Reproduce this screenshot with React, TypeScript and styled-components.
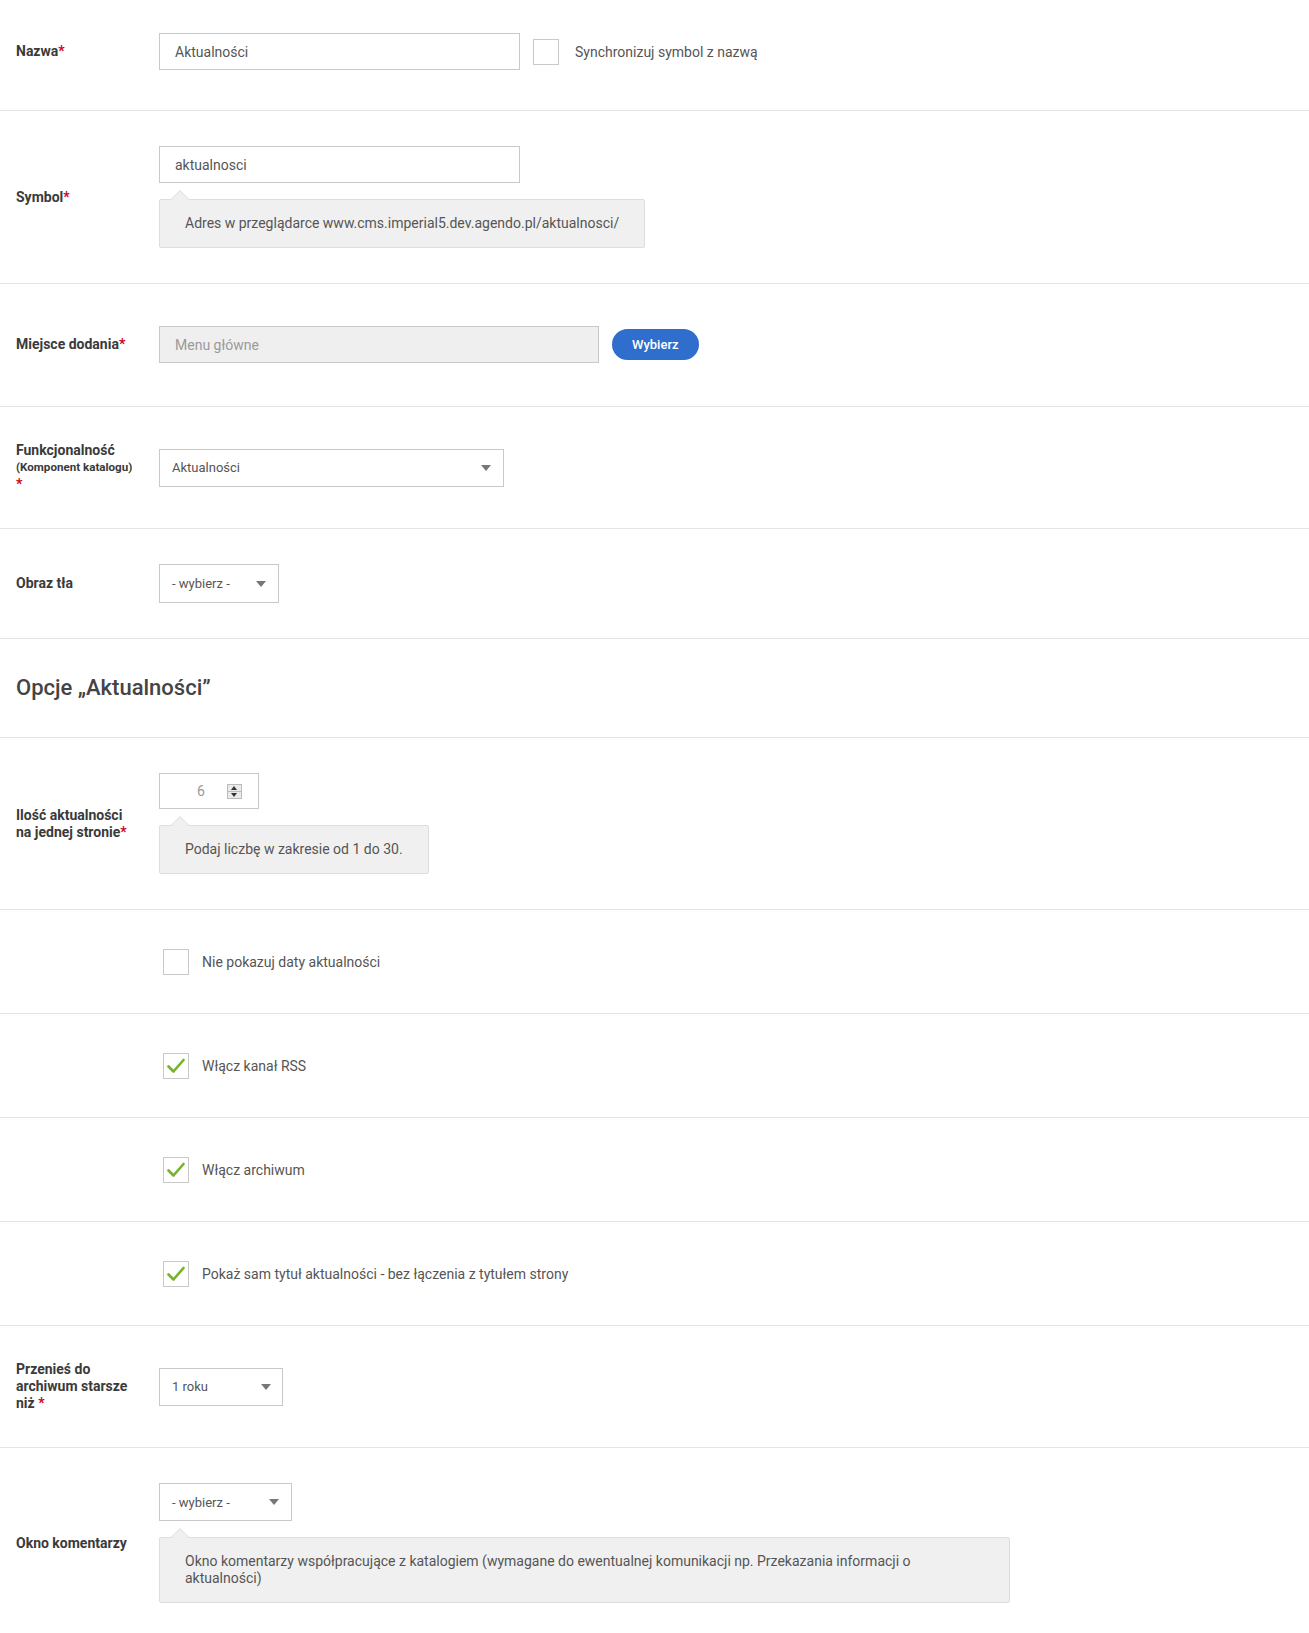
import React from "react";
import styled, { createGlobalStyle } from "styled-components";

const Global = createGlobalStyle`
  html, body { margin: 0; padding: 0; background: #fff; }
  body { font-family: Roboto, "Liberation Sans", Arial, sans-serif; color: #555; }
  * { box-sizing: border-box; }
`;

const Page = styled.div`
  width: 100%;
`;

const Row = styled.div<{ $pad?: string }>`
  display: flex;
  align-items: center;
  padding: ${(p) => p.$pad ?? "35px 0"};
  border-bottom: 1px solid #e4e4e4;
`;

const Label = styled.div`
  flex: 0 0 159px;
  padding: 0 23px 0 16px;
  font-size: 14px;
  line-height: 17px;
  font-weight: 700;
  color: #3a3a3a;
`;

const Sub = styled.span`
  display: block;
  font-size: 11.6px;
  line-height: 17px;
  white-space: nowrap;
`;

const Req = styled.span`
  color: #d0021b;
`;

const Field = styled.div`
  display: flex;
  flex-direction: column;
  align-items: flex-start;
  gap: 16px;
`;

const Inline = styled.div<{ $gap?: number }>`
  display: flex;
  align-items: center;
  gap: ${(p) => p.$gap ?? 13}px;
`;

const TextBox = styled.div<{ $w: number; $disabled?: boolean }>`
  width: ${(p) => p.$w}px;
  height: 37px;
  border: 1px solid #c9c9c9;
  background: ${(p) => (p.$disabled ? "#efefef" : "#fff")};
  color: ${(p) => (p.$disabled ? "#9a9a9a" : "#555")};
  font-size: 14px;
  display: flex;
  align-items: center;
  padding: 0 15px;
`;

const SelectBox = styled.div<{ $w: number; $arrowRight: number; $h?: number }>`
  position: relative;
  width: ${(p) => p.$w}px;
  height: ${(p) => p.$h ?? 38}px;
  border: 1px solid #c9c9c9;
  background: #fff;
  color: #555;
  font-size: 13px;
  display: flex;
  align-items: center;
  padding: 0 12px;
  &::after {
    content: "";
    position: absolute;
    right: ${(p) => p.$arrowRight}px;
    top: 50%;
    margin-top: -3px;
    border-left: 5px solid transparent;
    border-right: 5px solid transparent;
    border-top: 6px solid #777;
  }
`;

const NumberBox = styled.div`
  width: 100px;
  height: 36px;
  border: 1px solid #c9c9c9;
  display: flex;
  align-items: center;
  padding-left: 37px;
  gap: 22px;
  font-size: 14px;
  color: #999;
`;

const Spinner = styled.div`
  width: 15px;
  height: 15px;
  border: 1px solid #bbb;
  background: #eaeaea;
  display: flex;
  flex-direction: column;
`;

const SpinHalf = styled.div<{ $down?: boolean }>`
  flex: 1;
  display: flex;
  align-items: center;
  justify-content: center;
  border-top: ${(p) => (p.$down ? "1px solid #bbb" : "none")};
  &::before {
    content: "";
    border-left: 3px solid transparent;
    border-right: 3px solid transparent;
    ${(p) => (p.$down ? "border-top: 4px solid #333;" : "border-bottom: 4px solid #333;")}
  }
`;

const Hint = styled.div<{ $maxW?: number }>`
  position: relative;
  background: #f0f0f0;
  border: 1px solid #dddddd;
  border-radius: 2px;
  padding: 15px 25px;
  font-size: 14px;
  line-height: 17px;
  color: #555;
  max-width: ${(p) => (p.$maxW ? `${p.$maxW}px` : "none")};
  &::before {
    content: "";
    position: absolute;
    top: -10px;
    left: 10px;
    border-left: 10px solid transparent;
    border-right: 10px solid transparent;
    border-bottom: 10px solid #dddddd;
  }
  &::after {
    content: "";
    position: absolute;
    top: -9px;
    left: 11px;
    border-left: 9px solid transparent;
    border-right: 9px solid transparent;
    border-bottom: 9px solid #f0f0f0;
  }
`;

const Button = styled.button`
  height: 31px;
  padding: 0 20px;
  border: none;
  border-radius: 16px;
  background: #2f6ecc;
  color: #fff;
  font-family: Roboto, "Liberation Sans", Arial, sans-serif;
  font-size: 13px;
  font-weight: 500;
`;

const Box = styled.span`
  width: 26px;
  height: 26px;
  border: 1px solid #c9c9c9;
  background: #fff;
  display: inline-flex;
  align-items: center;
  justify-content: center;
  flex: 0 0 auto;
`;

const CheckLine = styled.label<{ $offset?: number; $gap?: number }>`
  display: flex;
  align-items: center;
  gap: ${(p) => p.$gap ?? 13}px;
  margin-left: ${(p) => p.$offset ?? 0}px;
  font-size: 14px;
  color: #555;
  height: 33px;
`;

const Heading = styled.h2`
  margin: 0;
  padding: 0 16px;
  font-size: 22px;
  line-height: 28px;
  font-weight: 500;
  color: #444;
`;

const Spacer = styled.div`
  flex: 0 0 159px;
`;

const Check = () => (
  <svg width="18" height="16" viewBox="0 0 18 16">
    <path d="M1.5 8.5 L6.5 13.5 L16.5 2" fill="none" stroke="#76b32a" strokeWidth="2.6" strokeLinecap="round" strokeLinejoin="round" />
  </svg>
);

const CheckBox = ({ checked, label, offset, gap }: { checked?: boolean; label: string; offset?: number; gap?: number }) => (
  <CheckLine $offset={offset} $gap={gap}>
    <Box>{checked && <Check />}</Box>
    {label}
  </CheckLine>
);

export default function App() {
  return (
    <Page>
      <Global />
      <Row $pad="33px 0 40px">
        <Label>
          Nazwa<Req>*</Req>
        </Label>
        <Inline>
          <TextBox $w={361}>Aktualności</TextBox>
          <CheckBox label="Synchronizuj symbol z nazwą" gap={16} />
        </Inline>
      </Row>

      <Row>
        <Label>
          Symbol<Req>*</Req>
        </Label>
        <Field>
          <TextBox $w={361}>aktualnosci</TextBox>
          <Hint>Adres w przeglądarce www.cms.imperial5.dev.agendo.pl/aktualnosci/</Hint>
        </Field>
      </Row>

      <Row $pad="42px 0 43px">
        <Label>
          Miejsce dodania<Req>*</Req>
        </Label>
        <Inline>
          <TextBox $w={440} $disabled>
            Menu główne
          </TextBox>
          <Button>Wybierz</Button>
        </Inline>
      </Row>

      <Row>
        <Label>
          Funkcjonalność
          <Sub>(Komponent katalogu)</Sub>
          <Req>*</Req>
        </Label>
        <SelectBox $w={345} $arrowRight={12}>Aktualności</SelectBox>
      </Row>

      <Row>
        <Label>Obraz tła</Label>
        <SelectBox $w={120} $arrowRight={12} $h={39}>- wybierz -</SelectBox>
      </Row>

      <Row>
        <Heading>Opcje „Aktualności”</Heading>
      </Row>

      <Row>
        <Label>
          Ilość aktualności na jednej stronie<Req>*</Req>
        </Label>
        <Field>
          <NumberBox>
            6
            <Spinner>
              <SpinHalf />
              <SpinHalf $down />
            </Spinner>
          </NumberBox>
          <Hint>Podaj liczbę w zakresie od 1 do 30.</Hint>
        </Field>
      </Row>

      <Row>
        <Spacer />
        <CheckBox label="Nie pokazuj daty aktualności" offset={4} />
      </Row>

      <Row>
        <Spacer />
        <CheckBox checked label="Włącz kanał RSS" offset={4} />
      </Row>

      <Row>
        <Spacer />
        <CheckBox checked label="Włącz archiwum" offset={4} />
      </Row>

      <Row>
        <Spacer />
        <CheckBox checked label="Pokaż sam tytuł aktualności - bez łączenia z tytułem strony" offset={4} />
      </Row>

      <Row>
        <Label>
          Przenieś do archiwum starsze niż <Req>*</Req>
        </Label>
        <SelectBox $w={124} $arrowRight={11}>1 roku</SelectBox>
      </Row>

      <Row>
        <Label>Okno komentarzy</Label>
        <Field>
          <SelectBox $w={133} $arrowRight={12}>- wybierz -</SelectBox>
          <Hint $maxW={851}>
            Okno komentarzy współpracujące z katalogiem (wymagane do ewentualnej komunikacji np. Przekazania informacji o aktualności)
          </Hint>
        </Field>
      </Row>
    </Page>
  );
}
